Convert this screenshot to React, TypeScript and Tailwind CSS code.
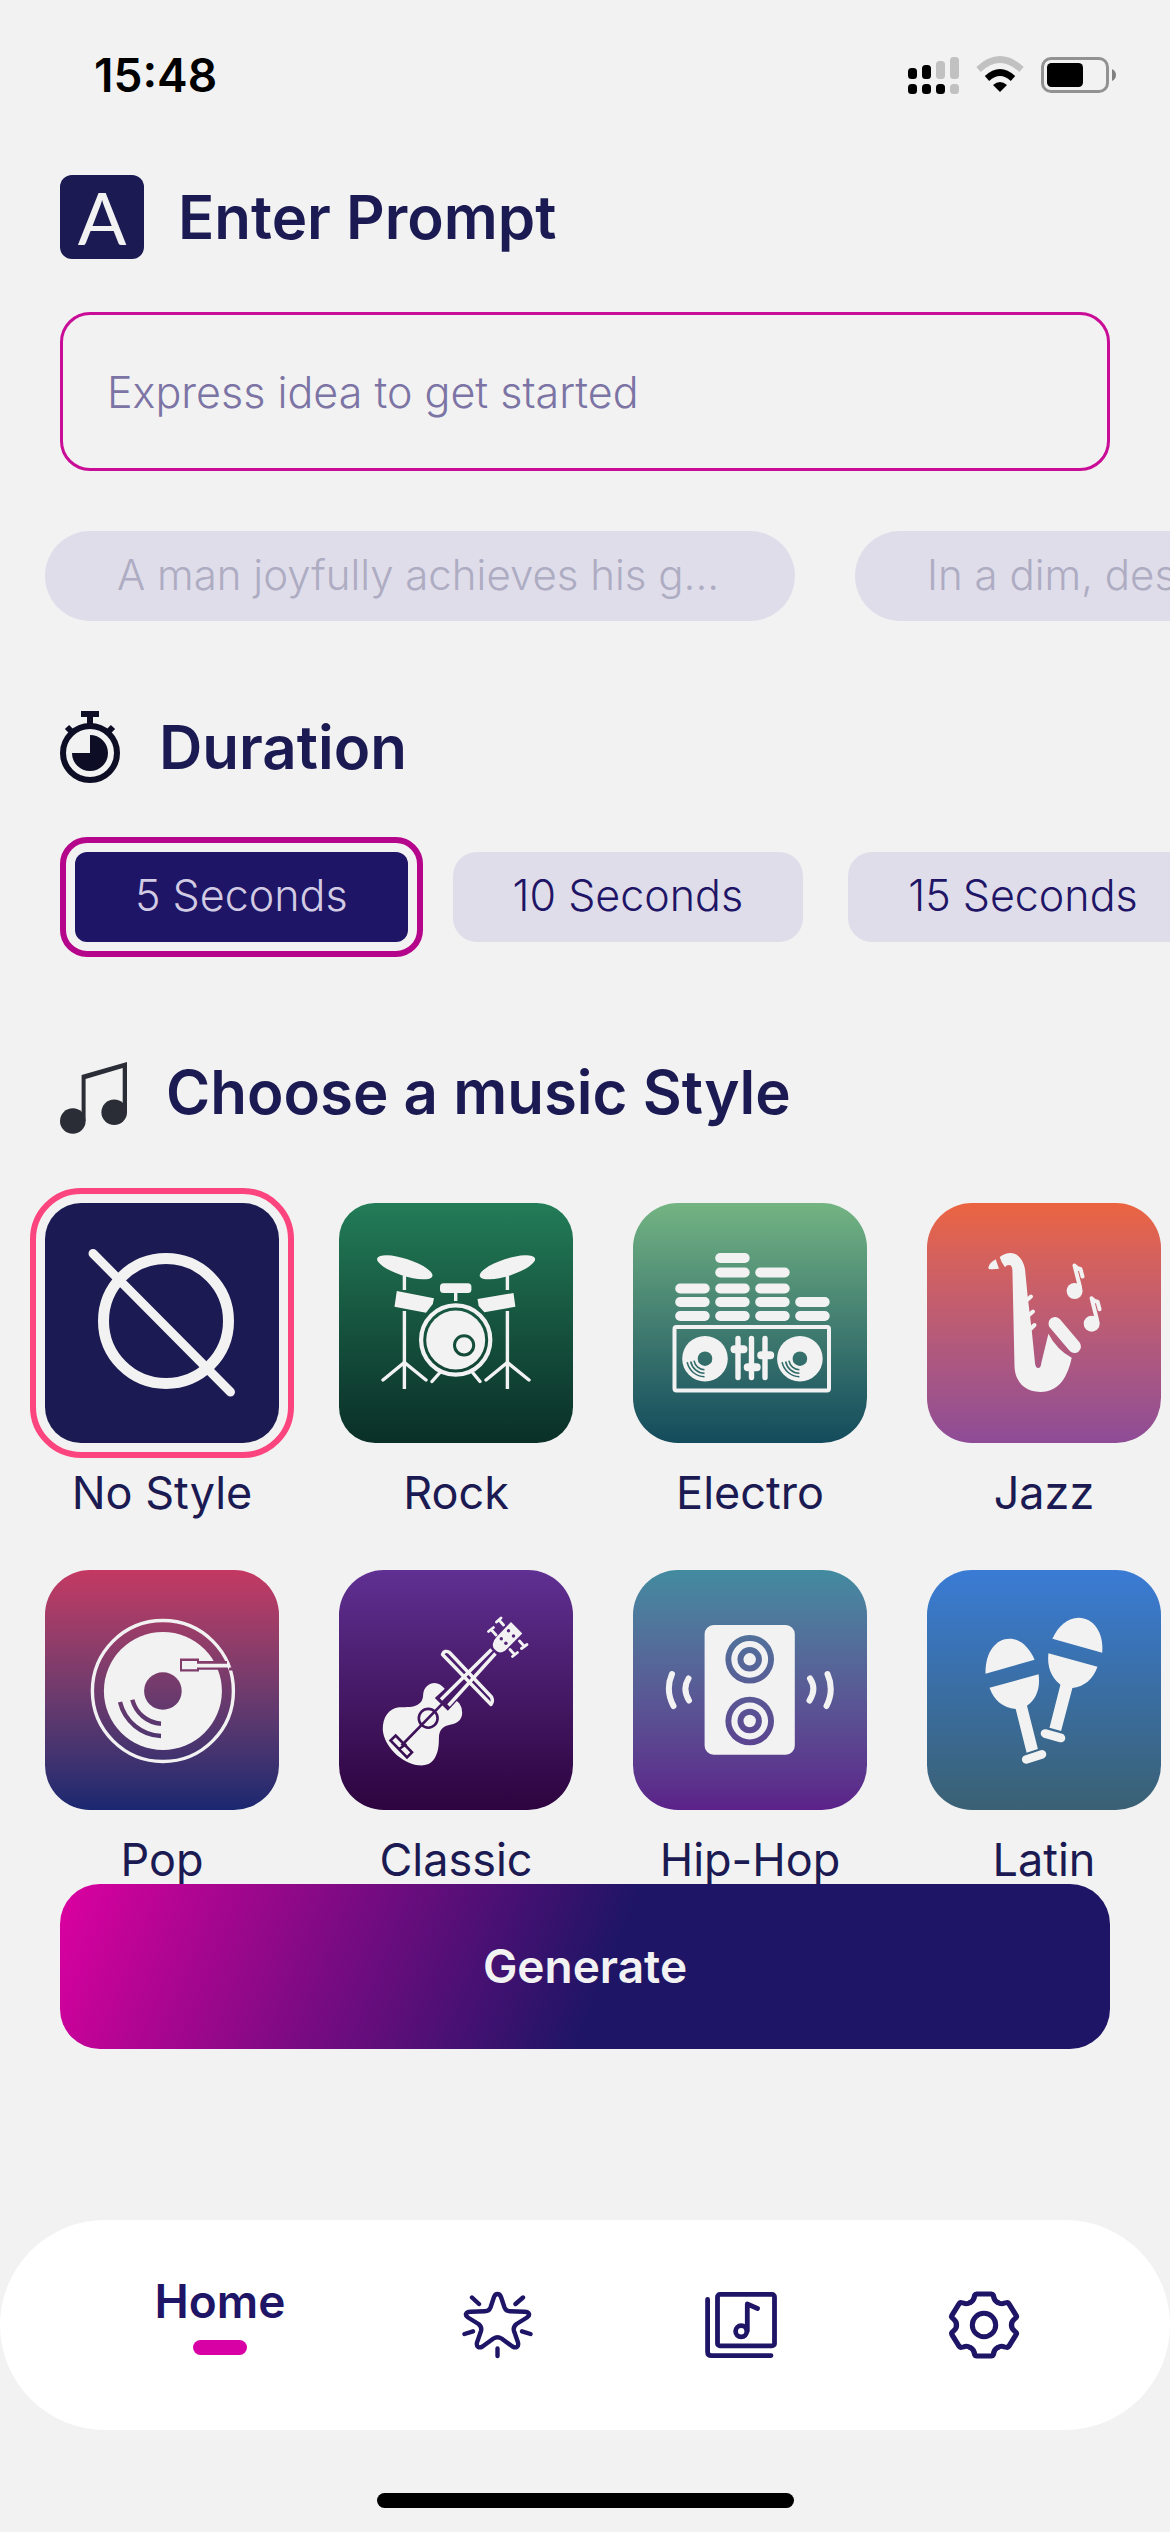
import { useId, useState } from "react";
import type { ReactNode } from "react";

const durations = ["5 Seconds", "10 Seconds", "15 Seconds"];

const prompts = [
  "A man joyfully achieves his g...",
  "In a dim, deserted alley a shadow moves",
];

// Shapes drawn white are kept, shapes drawn black let the tile show through.
const Glyph = ({ children }: { children: ReactNode }) => {
  const id = useId();

  return (
    <svg viewBox="0 0 234 240" className="h-full w-full" aria-hidden="true">
      <mask id={id} maskUnits="userSpaceOnUse" x="0" y="0" width="234" height="240">
        {children}
      </mask>
      <rect width="234" height="240" fill="#f2f2f2" mask={`url(#${id})`} />
    </svg>
  );
};

const NoStyle = () => (
  <Glyph>
    <g fill="none" stroke="white">
      <circle cx="121" cy="118" r="62.5" strokeWidth="11" />
      <path d="M48 50.5 185.5 189" strokeWidth="9" strokeLinecap="round" />
    </g>
  </Glyph>
);

const Drums = () => (
  <Glyph>
    <g fill="white">
      <ellipse cx="65.8" cy="64.3" rx="29" ry="8.5" transform="rotate(18 65.8 64.3)" />
      <ellipse cx="168.4" cy="64.3" rx="29" ry="8.5" transform="rotate(-18 168.4 64.3)" />
      <path d="M57.8 88 95 95.3 93.8 101 87 109.7 55.5 103.7Z" />
      <path d="M138.5 96 174.5 90 176.4 103.7 145.4 109.3 139.7 103Z" />
      <rect x="101" y="80.3" width="31.4" height="9.7" rx="3.5" />
      <circle cx="116.7" cy="137" r="29.5" />
    </g>
    <g fill="none" stroke="white" strokeWidth="3.4">
      <path d="M65.4 73V87M65.4 108V186M168.4 73V87M168.4 108V186M116.7 89V98" />
      <path
        d="M44 177 65.4 159.5 87 177M147 177 168.4 159.5 190 177M100.5 170 93 178.5M134 170 141 178.5"
        strokeLinecap="round"
      />
      <circle cx="116.7" cy="137" r="34.6" strokeWidth="4.2" />
      <circle cx="125.1" cy="142.3" r="9.6" stroke="black" strokeWidth="3" />
    </g>
  </Glyph>
);

const Turntable = ({ cx }: { cx: number }) => (
  <g transform={`translate(${cx} 155.7)`}>
    <circle r="22.8" fill="white" />
    <circle r="7.3" fill="black" />
    <path
      d="M-17.8 3.5A18 18 0 0 0-.5 18M-14.3 2.8A14.5 14.5 0 0 0-.5 14.5M-11 2A11 11 0 0 0-.5 11"
      fill="none"
      stroke="black"
      strokeWidth="1.6"
    />
  </g>
);

const bars = [3, 5, 4, 2];
const barTops = [108, 94, 80.5, 64.5, 50];

const Mixer = () => (
  <Glyph>
    {bars.map((count, column) =>
      barTops
        .slice(0, count)
        .map((top) => (
          <rect
            key={`${column}-${top}`}
            x={42.2 + column * 40}
            y={top}
            width="34.5"
            height="10"
            rx="5"
            fill="white"
          />
        ))
    )}
    <rect x="41.5" y="124" width="154.5" height="63.5" rx="2" fill="none" stroke="white" strokeWidth="4" />
    <Turntable cx={72} />
    <Turntable cx={166.9} />
    <g stroke="white" strokeLinecap="round">
      <path d="M105 135.5V174.5M118.5 135.5V174.5M132 135.5V174.5" strokeWidth="5.4" />
      <path d="M101.5 146.3H110.5M114.7 164.3H123.7M128.2 152.3H137.2" strokeWidth="8" />
    </g>
  </Glyph>
);

const Sax = () => (
  <Glyph>
    <g fill="white">
      <path d="M61.4 64.5Q62 60 68.7 56.3L72 65.7Q66 66.5 61.8 66Z" />
      <path d="M72.7 54Q78 50 83.5 50C91 50 96.5 57 98 66L100.7 93.7 104.7 127 108 160Q108.5 165 111.2 165T114.3 160L121.4 130.7Q130 147 144.7 154.7C141 172 133 189 113.4 189C97 189 87.8 178 87.5 163L85.4 67Q85 62 82 62T78 64.3Q74 59 72.7 54Z" />
      <circle cx="147.6" cy="88" r="8" />
      <circle cx="164.7" cy="120.7" r="8" />
    </g>
    <g fill="none" stroke="white" strokeLinecap="round" strokeLinejoin="round">
      <path d="M128 120.5 147.5 143.5" strokeWidth="13" />
      <path d="M100 97 104 93.5M102 112 106 108.5M104 125.5 107.5 122" strokeWidth="4" />
      <path d="M153 84 147.5 62.5Q150 65.5 153.5 66L155.5 73.5" strokeWidth="4" />
      <path d="M170 116.7 164.6 95.2Q167 98.2 170.6 98.7L172.6 106.2" strokeWidth="4" />
    </g>
  </Glyph>
);

const Vinyl = () => (
  <Glyph>
    <circle cx="117.9" cy="121" r="70.5" fill="none" stroke="white" strokeWidth="3.4" />
    <circle cx="117.9" cy="121" r="59" fill="white" />
    <circle cx="117.9" cy="121" r="18.8" fill="black" />
    <path
      d="M87.3 129.7A31.5 33 0 0 0 116 153.7M75 132A44 45 0 0 0 116 166"
      fill="none"
      stroke="black"
      strokeWidth="4.4"
    />
    <path d="M135 88.5H154V91H182V99.8H154V101.5H135Z" fill="black" />
    <path d="M184 97.5H192V100.5H184Z" fill="black" />
    <path d="M137 91H152V93.7H185V97.5H152V99.3H137Z" fill="white" />
  </Glyph>
);

const Violin = () => (
  <Glyph>
    <path
      d="M84.2 124C85 117 90 113 95.7 113Q101 113 106 119L120.6 133.7Q123.5 138 123.2 143C123 150 118 153.5 112 154.5C104 156 100 160 99.9 168C100 176 99 183 95.5 188.5C91.5 194.5 86 196 79 195.3C62 193 45 176 43.8 160C43.5 147 50 138.5 60 137.3C68 137 74 137.5 79 134.5C83 132 84 129 84.2 124Z"
      fill="white"
    />
    <g fill="none" stroke="black" strokeWidth="2.6">
      <circle cx="89.2" cy="148.3" r="9.4" />
      <path d="M106.4 130.7 62.5 175.5" />
      <path d="M56.6 165.5 73 182.3 68 187.5 51.5 170.5ZM67.5 174 60 179" />
    </g>
    <path d="M151 79 158 85 108.8 138.5 98 128Z" fill="black" stroke="black" strokeWidth="3" />
    <g fill="none" stroke="white" strokeWidth="3.4">
      <path d="M152.5 79.5 102 129.5M156.5 83.5 109.5 135.5" />
      <path
        d="M103.5 84.5Q105.5 79.5 110.5 82.5L152.5 127Q154.5 131 152 134.5Z"
        strokeLinejoin="round"
      />
    </g>
    <path
      d="M172 52 183.3 63.5 166 80.7Q161 84 157.5 81Q153 78 154 73.5Q154.5 70 158 66.5Z"
      fill="white"
    />
    <g fill="black">
      <circle cx="169.5" cy="60.7" r="1.7" />
      <circle cx="174.5" cy="66" r="1.7" />
      <circle cx="162.3" cy="68.7" r="1.7" />
      <circle cx="166.9" cy="73.3" r="1.7" />
    </g>
    <path
      d="M157.5 52 162 48M160 50 164.5 55M149.5 61.5 154.5 57.5M152.5 60 157 65M182.5 78.5 188 74.5M185 76 180.5 71M173.5 86.5 178.5 82.5M175.5 84.5 171 79.5"
      fill="none"
      stroke="white"
      strokeWidth="2.8"
      strokeLinecap="round"
    />
  </Glyph>
);

const Cone = ({ cy }: { cy: number }) => (
  <>
    <circle cx="116.7" cy={cy} r="24.3" fill="black" />
    <circle cx="116.7" cy={cy} r="18.4" fill="white" />
    <circle cx="116.7" cy={cy} r="12.2" fill="black" />
    <circle cx="116.7" cy={cy} r="6.2" fill="white" />
  </>
);

const Speaker = () => (
  <Glyph>
    <rect x="71.6" y="55" width="90.2" height="129.7" rx="9" fill="white" />
    <Cone cy={89.3} />
    <Cone cy={151} />
    <path
      d="M55.5 108.5Q49 119 56 130.5M39 104Q32 120 40.5 136M177 108.5Q184 119 176.5 130.5M194.5 104Q201.5 120 193.5 136"
      fill="none"
      stroke="white"
      strokeWidth="6"
      strokeLinecap="round"
    />
  </Glyph>
);

const Maracas = () => (
  <Glyph>
    <g fill="white">
      <path d="M58.5 103.7C58 82 69 68.7 82.5 68.7C93 68.7 102 77 107.6 89.7Z" />
      <path d="M62.5 117.7 111.6 104.3C113.5 118 109.5 129 100 135.7L110.9 179 99.6 182.7 88.7 139C76 138 67 130 62.5 117.7Z" />
      <path d="M125.4 68.7C131 56 141 47.7 151.6 47.7C166 47.7 177 62 175.2 82.7Z" />
      <path d="M121.4 83.3 170.5 96.7C166 109 157 117 145.4 118L134.1 161 122.5 157.7 133.4 114.7C124 107 120 97 121.4 83.3Z" />
    </g>
    <path d="M99.2 189.5 115 184.3M118 163.5 134 168" stroke="white" strokeWidth="8.6" strokeLinecap="round" />
  </Glyph>
);

const styles = [
  { name: "No Style", art: <NoStyle />, tile: "rounded-[36px] bg-[#1b1a52]" },
  { name: "Rock", art: <Drums />, tile: "rounded-[36px] bg-linear-to-b from-[#237c58] to-[#0a2f27]" },
  { name: "Electro", art: <Mixer />, tile: "rounded-[45px] bg-linear-to-b from-[#73b482] to-[#134b5c]" },
  { name: "Jazz", art: <Sax />, tile: "rounded-[45px] bg-linear-to-b from-[#eb6440] to-[#8e4c96]" },
  { name: "Pop", art: <Vinyl />, tile: "rounded-[45px] bg-linear-to-b from-[#c43862] to-[#1a2770]" },
  { name: "Classic", art: <Violin />, tile: "rounded-[45px] bg-linear-to-b from-[#603092] to-[#2d043f]" },
  { name: "Hip-Hop", art: <Speaker />, tile: "rounded-[45px] bg-linear-to-b from-[#428ba0] to-[#5b2189]" },
  { name: "Latin", art: <Maracas />, tile: "rounded-[45px] bg-linear-to-b from-[#3a7bd5] to-[#3a6073]" },
];

const Stopwatch = () => (
  <svg viewBox="0 0 60 72" className="h-[72px] w-[60px] shrink-0" fill="none" stroke="#0d0d26" aria-hidden="true">
    <circle cx="30" cy="42" r="27" strokeWidth="6" />
    <path d="M21 3H39M30 5V14M7 16 13 22M53 16 47 22" strokeWidth="6" />
    <path d="M30 24A18 18 0 1 1 12 42H30Z" fill="#0d0d26" stroke="none" />
  </svg>
);

const Notes = () => (
  <svg viewBox="0 0 67 72" className="h-[72px] w-[67px] shrink-0" fill="#2a2d36" aria-hidden="true">
    <circle cx="12.8" cy="59" r="12.8" />
    <circle cx="54.2" cy="50.3" r="12.8" />
    <path d="M21.6 13 67 0V50.3H62.7V6L25.6 17V59H21.6Z" />
  </svg>
);

const StatusIcons = () => (
  <svg viewBox="0 0 208 38" className="h-[38px] w-[208px]" aria-hidden="true">
    <rect x="0" y="12" width="9" height="11" rx="3.5" />
    <rect x="14" y="9" width="9" height="14" rx="3.5" />
    <g fill="#c1c1c1">
      <rect x="28" y="5" width="9" height="18" rx="3.5" />
      <rect x="42" y="1" width="9" height="22" rx="3.5" />
      <rect x="42" y="28" width="9" height="10" rx="3.5" />
    </g>
    <rect x="0" y="28" width="9" height="10" rx="3.5" />
    <rect x="14" y="28" width="9" height="10" rx="3.5" />
    <rect x="28" y="28" width="9" height="10" rx="3.5" />
    <path d="M70.5 13.5Q92-6.5 113.5 13.5" fill="none" stroke="#c1c1c1" strokeWidth="6.5" />
    <path d="M79 22.5Q92 10.5 105 22.5" fill="none" stroke="black" strokeWidth="6.5" />
    <path d="M85 29Q92 23 99 29L92 36Z" />
    <rect x="134.5" y="2.5" width="65" height="33" rx="8.5" fill="none" stroke="#929292" strokeWidth="3" />
    <rect x="139" y="7" width="36" height="24" rx="4.5" />
    <path d="M204 13Q208 15 208 19T204 25Z" fill="#808080" />
  </svg>
);

const StarIcon = () => (
  <svg viewBox="0 0 72 72" className="size-[72px]" fill="none" stroke="#1f1566" strokeWidth="4.4" strokeLinecap="round" strokeLinejoin="round" aria-hidden="true">
    <path d="M33 8C34.5 4 38.5 4 40 8L43.5 18.5Q45 22.3 49 22.3L63.5 22.7C68.5 23 69.5 26 66 28.5L55.5 35Q51.8 38 53 42L57 53.5C58 58 55 59.5 51.5 57.5L40.5 49.5Q36.5 47 32.5 49.5L21.5 57.5C18 59.5 15 58 16 53.5L20 42Q21.2 38 17.5 35L7 28.5C3.5 26 4.5 23 9.5 22.7L24 22.3Q28 22.3 29.5 18.5Z" />
    <path d="M11 8.5 18 15M62 8.5 54.5 15M3.5 45 12 42.3M69.5 45 61 42.3M36.5 59.5V67" />
  </svg>
);

const LibraryIcon = () => (
  <svg viewBox="0 0 72 72" className="size-[72px]" fill="none" stroke="#1f1566" strokeWidth="4.8" strokeLinecap="round" strokeLinejoin="round" aria-hidden="true">
    <path d="M2.6 10.5V63Q2.6 66.6 6.5 66.6H66" />
    <rect x="12.5" y="5.4" width="57" height="51.5" rx="2.5" />
    <circle cx="36.2" cy="42.3" r="5.6" />
    <path d="M42.3 42V15L52.5 19.5" />
  </svg>
);

const GearIcon = () => (
  <svg viewBox="-36 -36 72 72" className="size-[72px]" fill="none" stroke="#1f1566" strokeWidth="5" strokeLinecap="round" strokeLinejoin="round" aria-hidden="true">
    <circle r="11.7" />
    <g transform="scale(1.06 1)">
      {[0, 60, 120, 180, 240, 300].map((angle) => (
        <path
          key={angle}
          d="M-13-22.5C-10.5-23.7-9.8-25-9.3-27.5L-8.6-30Q-8.2-31-7-31H7Q8.2-31 8.6-30L9.3-27.5C9.8-25 10.5-23.7 13-22.5"
          transform={`rotate(${angle})`}
        />
      ))}
    </g>
  </svg>
);

const tabs = [
  { name: "Discover", icon: <StarIcon /> },
  { name: "Library", icon: <LibraryIcon /> },
  { name: "Settings", icon: <GearIcon /> },
];

const App = () => {
  const [duration, setDuration] = useState<string>("5 Seconds");
  const [style, setStyle] = useState<string>("No Style");

  return (
    <div className="flex h-screen flex-col overflow-hidden bg-[#f2f2f2] font-[Inter,sans-serif] font-light text-[#1b1a52]">
      <header className="flex h-[150px] shrink-0 items-center justify-between pr-[54px] pl-[94px] text-black">
        <time className="text-[46px] font-semibold">15:48</time>
        <StatusIcons />
      </header>

      <main className="min-h-0 flex-1 overflow-hidden pt-[25px]">
        <section>
          <label htmlFor="prompt" className="flex items-center gap-[34px] px-[60px]">
            <span className="flex size-[84px] items-center justify-center rounded-[12px] bg-[#1b1a52] font-[Lato,sans-serif] text-[72px] leading-none font-normal text-[#f2f2f2]">
              A
            </span>
            <span className="text-[60px] leading-[72px] font-semibold">Enter Prompt</span>
          </label>
          <div className="mt-[53px] px-[60px]">
            <input
              id="prompt"
              type="text"
              placeholder="Express idea to get started"
              className="h-[159px] w-full rounded-[30px] border-3 border-[#c90d97] px-[44px] text-[43px] outline-none placeholder:text-[#7c74a4]"
            />
          </div>
          <div className="mt-[60px] flex gap-[60px] overflow-x-auto px-[45px] [scrollbar-width:none]">
            {prompts.map((prompt) => (
              <button
                key={prompt}
                className="h-[90px] w-[750px] shrink-0 truncate rounded-full bg-[#dfddea] px-[72px] pb-1 text-left text-[42px] text-[#aeacc2]"
              >
                {prompt}
              </button>
            ))}
          </div>
        </section>

        <section className="mt-[90px]">
          <h2 className="flex items-center gap-[39px] px-[60px] text-[60px] leading-[72px] font-semibold">
            <Stopwatch />
            Duration
          </h2>
          <div className="mt-[54px] flex gap-[45px] overflow-x-auto px-[75px] py-[15px] [scrollbar-width:none]">
            {durations.map((item) => (
              <button
                key={item}
                className={`h-[90px] shrink-0 px-[60px] pb-1 text-[43px] ${
                  duration === item
                    ? "rounded-[12px] bg-[#1f1566] text-[#d2cbe4] outline-6 outline-offset-9 outline-[#b4058b]"
                    : "rounded-[24px] bg-[#dfddea] text-[#1f1566]"
                }`}
                onClick={() => {
                  setDuration(item);
                }}
              >
                {item}
              </button>
            ))}
          </div>
        </section>

        <section className="mt-[105px]">
          <h2 className="flex items-start gap-[39px] px-[60px] text-[60px] leading-[60px] font-semibold">
            <Notes />
            Choose a music Style
          </h2>
          <div className="mt-[54px] overflow-x-auto px-[45px] py-[15px] [scrollbar-width:none]">
            <div className="grid w-max grid-cols-4 gap-x-[60px] gap-y-[47px]">
              {styles.map((item) => (
                <button
                  key={item.name}
                  className="flex w-[234px] flex-col items-center gap-[20px]"
                  onClick={() => {
                    setStyle(item.name);
                  }}
                >
                  <span
                    className={`h-[240px] w-full ${item.tile} ${
                      style === item.name ? "outline-6 outline-offset-9 outline-[#fc447e]" : ""
                    }`}
                  >
                    {item.art}
                  </span>
                  <span className="text-[45px] leading-[60px] font-normal">{item.name}</span>
                </button>
              ))}
            </div>
          </div>
        </section>
      </main>

      <div className="px-[60px]">
        <button className="h-[165px] w-full rounded-[40px] bg-[linear-gradient(112deg,#dc00a0_0%,#1f1566_52%)] text-[46px] font-semibold text-[#f2f2f2]">
          Generate
        </button>
      </div>

      <nav className="mt-[171px] flex h-[210px] shrink-0 items-center justify-between rounded-full bg-white px-[150px]">
        <a href="#home" className="flex w-[140px] flex-col items-center gap-[9px] pb-6 text-[#1f1566]">
          <span className="text-[46px] leading-[60px] font-semibold">Home</span>
          <span className="h-[15px] w-[54px] rounded-full bg-[#d800a4]" />
        </a>
        {tabs.map((tab) => (
          <a key={tab.name} href={`#${tab.name.toLowerCase()}`} aria-label={tab.name}>
            {tab.icon}
          </a>
        ))}
      </nav>

      <div className="mx-auto mt-[63px] mb-[24px] h-[15px] w-[417px] shrink-0 rounded-full bg-black" />
    </div>
  );
};

export default App;
